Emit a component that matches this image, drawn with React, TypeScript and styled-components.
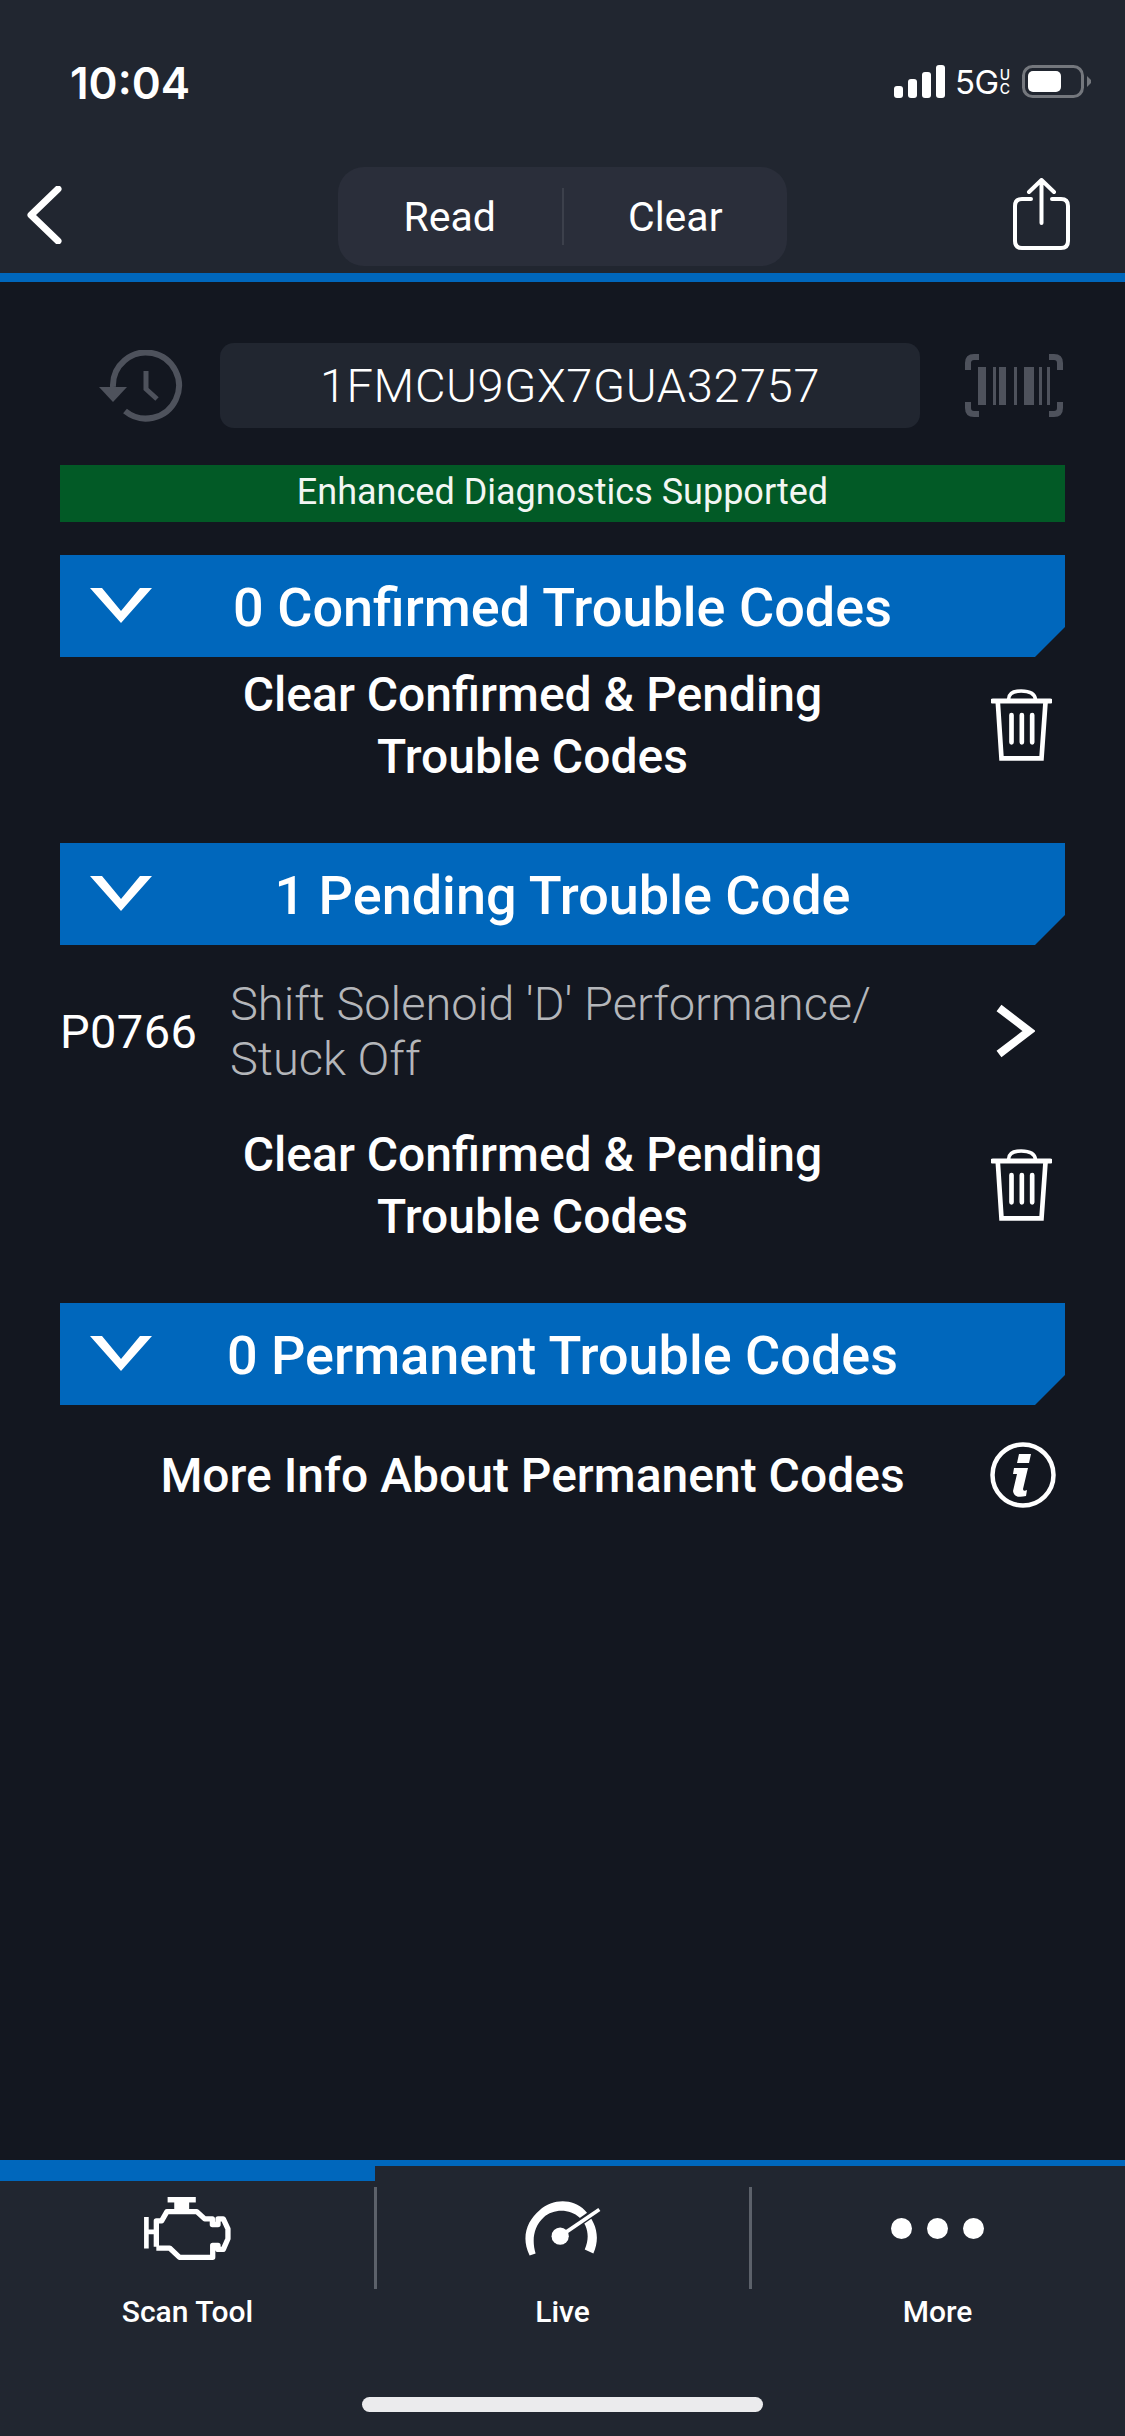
import React from "react";
import styled, { createGlobalStyle } from "styled-components";

const Global = createGlobalStyle`
  html, body { margin: 0; padding: 0; background: #131720; }
  * { box-sizing: border-box; }
`;

const Screen = styled.div`
  width: 1125px;
  height: 2436px;
  display: flex;
  flex-direction: column;
  background: #131720;
  color: #fff;
  font-family: Roboto, "Liberation Sans", sans-serif;
  overflow: hidden;
`;

const TopArea = styled.header`
  background: #212630;
  border-bottom: 9px solid #0067bc;
  height: 282px;
  display: flex;
  flex-direction: column;
`;

const StatusBar = styled.div`
  height: 160px;
  flex: none;
  display: flex;
  justify-content: space-between;
  align-items: flex-start;
  padding: 61px 34px 0 70px;
`;

const Clock = styled.span`
  font-family: Inter, Roboto, sans-serif;
  font-size: 44px;
  font-weight: 600;
  line-height: 44px;
`;

const StatusIcons = styled.div`
  display: flex;
  align-items: flex-start;
  margin-top: 4px;
`;

const NetworkLabel = styled.span`
  font-family: Inter, Roboto, sans-serif;
  font-size: 33px;
  font-weight: 400;
  line-height: 34px;
  margin-left: 10px;
  letter-spacing: -0.5px;
`;

const NetworkSub = styled.span`
  display: flex;
  flex-direction: column;
  font-family: Inter, Roboto, sans-serif;
  font-size: 14px;
  font-weight: 500;
  line-height: 14px;
  margin: 3px 12px 0 1px;
`;

const NavBar = styled.div`
  flex: none;
  height: 113px;
  padding-top: 7px;
  position: relative;
  display: flex;
  justify-content: center;
  align-items: flex-start;
`;

const BackSlot = styled.div`
  position: absolute;
  left: 26px;
  top: 26px;
  display: flex;
`;

const ShareSlot = styled.div`
  position: absolute;
  right: 55px;
  top: 18px;
  display: flex;
`;

const Segmented = styled.div`
  width: 449px;
  height: 99px;
  border-radius: 26px;
  background: #2a2e3a;
  display: flex;
  align-items: center;
`;

const Segment = styled.div<{ $divided?: boolean }>`
  flex: 1;
  height: 57px;
  padding-top: 1px;
  display: flex;
  align-items: center;
  justify-content: center;
  font-size: 41px;
  border-right: ${(p) => (p.$divided ? "2px solid #3c404b" : "none")};
`;

const Content = styled.main`
  flex: 1;
  padding: 61px 60px 0;
  display: flex;
  flex-direction: column;
`;

const VinRow = styled.div`
  height: 85px;
  display: flex;
  align-items: center;
`;

const VinIconLeft = styled.div`
  width: 160px;
  padding-left: 39px;
  display: flex;
  align-items: center;
`;

const VinField = styled.div`
  width: 700px;
  height: 85px;
  background: #212630;
  border-radius: 14px;
  display: flex;
  align-items: center;
  justify-content: center;
  font-size: 47px;
  font-weight: 300;
  letter-spacing: 0.6px;
`;

const VinIconRight = styled.div`
  flex: 1;
  display: flex;
  justify-content: flex-end;
`;

const GreenBanner = styled.div`
  margin-top: 37px;
  height: 57px;
  padding-bottom: 3px;
  background: #025a26;
  display: flex;
  align-items: center;
  justify-content: center;
  font-size: 36px;
  color: #f2f6f3;
`;

const Section = styled.section<{ $top: number }>`
  margin-top: ${(p) => p.$top}px;
  display: flex;
  flex-direction: column;
`;

const SectionHeader = styled.div`
  position: relative;
  height: 102px;
  padding-top: 2px;
  background: #0067bc;
  clip-path: polygon(0 0, 100% 0, 100% 72px, calc(100% - 30px) 100%, 0 100%);
  display: flex;
  align-items: center;
  justify-content: center;
  font-size: 54px;
  font-weight: 500;
`;

const ChevronSlot = styled.div`
  position: absolute;
  left: 30px;
  top: 33px;
  display: flex;
`;

const ActionRow = styled.div<{ $top: number }>`
  margin-top: ${(p) => p.$top}px;
  display: grid;
  grid-template-columns: 1fr 74px;
  align-items: center;
`;

const ActionText = styled.div`
  padding-left: 14px;
  text-align: center;
  font-size: 48px;
  font-weight: 500;
  line-height: 62px;
`;

const ActionIcon = styled.div`
  display: flex;
  justify-content: flex-end;
  padding-right: 13px;
  height: 72px;
  margin-top: -2px;
  align-items: center;
`;

const InfoGlyph = styled.svg`
  flex: none;
  margin-right: -4px;
`;

const CodeRow = styled.div`
  margin-top: 31px;
  display: flex;
  align-items: center;
  padding-right: 30px;
`;

const CodeId = styled.div`
  width: 170px;
  flex: none;
  font-size: 47px;
  letter-spacing: 0.4px;
`;

const CodeDesc = styled.div`
  flex: 1;
  font-size: 47px;
  font-weight: 300;
  line-height: 55px;
  color: #b4b6ba;
`;

const TabBar = styled.nav`
  flex: none;
  height: 276px;
  background: #212630;
  border-top: 6px solid #0067bc;
  display: flex;
  flex-direction: column;
`;

const Tabs = styled.div`
  display: flex;
`;

const Tab = styled.div`
  width: 375px;
  display: flex;
  flex-direction: column;
`;

const TabIndicator = styled.div<{ $active?: boolean }>`
  height: 15px;
  background: ${(p) => (p.$active ? "#0067bc" : "transparent")};
`;

const TabIcon = styled.div<{ $divided?: boolean }>`
  margin-top: 6px;
  height: 102px;
  margin-right: -2px;
  border-right: ${(p) => (p.$divided ? "3px solid #5c616a" : "3px solid transparent")};
  display: flex;
  justify-content: center;
  align-items: flex-start;
`;

const TabIconInner = styled.div<{ $top: number }>`
  margin-top: ${(p) => p.$top}px;
  display: flex;
`;

const TabLabel = styled.div`
  margin-top: 8px;
  text-align: center;
  font-size: 30px;
  font-weight: 500;
  line-height: 30px;
`;

const Dots = styled.div`
  display: flex;
  gap: 15px;
`;

const Dot = styled.span`
  width: 21px;
  height: 21px;
  border-radius: 50%;
  background: #fff;
`;

const HomeIndicator = styled.div`
  width: 401px;
  height: 15px;
  border-radius: 8px;
  background: #ebebed;
  margin: 70px auto 0;
`;

const Trash = () => (
  <svg width="61" height="72" viewBox="93 260 182 216">
    <path d="M145 292 C145 272 160 266 183 266 C207 266 224 272 226 292" fill="none" stroke="#fff" strokeWidth="11" />
    <path d="M98 296 H270" stroke="#fff" strokeWidth="15" strokeLinecap="round" />
    <path d="M113 300 L124 468 H244 L256 300" fill="none" stroke="#fff" strokeWidth="14" />
    <path d="M154 338 V420 M185 338 V420 M216 338 V420" stroke="#fff" strokeWidth="14" strokeLinecap="round" />
  </svg>
);

const Chevron = () => (
  <svg width="62" height="35" viewBox="0 0 62 35">
    <path d="M0 0 H12 L31 23 L50 0 H62 L31 35 Z" fill="#fff" />
  </svg>
);

const App = () => (
  <Screen>
    <Global />
    <TopArea>
      <StatusBar>
        <Clock>10:04</Clock>
        <StatusIcons>
          <svg width="51" height="33" viewBox="0 0 51 33">
            <rect x="0" y="21" width="9" height="12" rx="3" fill="#fff" />
            <rect x="14" y="14" width="9" height="19" rx="3" fill="#fff" />
            <rect x="28" y="7" width="9" height="26" rx="3" fill="#fff" />
            <rect x="42" y="0" width="9" height="33" rx="3" fill="#fff" />
          </svg>
          <NetworkLabel>5G</NetworkLabel>
          <NetworkSub>
            <span>U</span>
            <span>C</span>
          </NetworkSub>
          <svg width="69" height="33" viewBox="0 0 69 33">
            <rect x="1.5" y="1.5" width="59" height="30" rx="9" fill="none" stroke="#74777d" strokeWidth="3" />
            <rect x="6" y="6" width="33" height="21" rx="5" fill="#fff" />
            <path d="M65 11 L69 15 V18 L65 22 Z" fill="#74777d" />
          </svg>
        </StatusIcons>
      </StatusBar>
      <NavBar>
        <BackSlot>
          <svg width="36" height="58" viewBox="0 0 36 58">
            <path d="M32 3 L5 29 L32 55" fill="none" stroke="#fff" strokeWidth="7" strokeLinecap="round" strokeLinejoin="round" />
          </svg>
        </BackSlot>
        <Segmented>
          <Segment $divided>Read</Segment>
          <Segment>Clear</Segment>
        </Segmented>
        <ShareSlot>
          <svg width="57" height="72" viewBox="0 0 57 72">
            <path d="M18 21 H9 Q2 21 2 28 V63 Q2 70 9 70 H48 Q55 70 55 63 V28 Q55 21 48 21 H39" fill="none" stroke="#fff" strokeWidth="4" strokeLinecap="round" />
            <path d="M28.5 45 V2 M16 14 L28.5 2 L41 14" fill="none" stroke="#fff" strokeWidth="4" strokeLinecap="round" strokeLinejoin="round" />
          </svg>
        </ShareSlot>
      </NavBar>
    </TopArea>

    <Content>
      <VinRow>
        <VinIconLeft>
          <svg width="84" height="72" viewBox="99 351 84 72">
            <path d="M113 388 A33 33 0 1 1 125 412" fill="none" stroke="#4e525c" strokeWidth="6" />
            <path d="M99 388 H127 L113 403 Z" fill="#4e525c" />
            <path d="M146 372 V390 L157 400" fill="none" stroke="#4e525c" strokeWidth="5" />
          </svg>
        </VinIconLeft>
        <VinField>1FMCU9GX7GUA32757</VinField>
        <VinIconRight>
          <svg width="102" height="66" viewBox="963 354 102 66">
            <path d="M968 371 V364 Q968 358 974 358 H979 M1049 358 H1054 Q1060 358 1060 364 V371 M968 403 V409 Q968 415 974 415 H979 M1049 415 H1054 Q1060 415 1060 409 V403" fill="none" stroke="#4e525c" strokeWidth="6" />
            <path d="M978 368 H986 V406 H978 Z M993 368 H996 V406 H993 Z M999 368 H1006 V406 H999 Z M1014 368 H1017 V406 H1014 Z M1024 368 H1034 V406 H1024 Z M1039 368 H1042 V406 H1039 Z M1047 368 H1050 V406 H1047 Z" fill="#4e525c" />
          </svg>
        </VinIconRight>
      </VinRow>

      <GreenBanner>Enhanced Diagnostics Supported</GreenBanner>

      <Section $top={33}>
        <SectionHeader>
          <ChevronSlot>
            <Chevron />
          </ChevronSlot>
          0 Confirmed Trouble Codes
        </SectionHeader>
        <ActionRow $top={7}>
          <ActionText>
            Clear Confirmed &amp; Pending
            <br />
            Trouble Codes
          </ActionText>
          <ActionIcon>
            <Trash />
          </ActionIcon>
        </ActionRow>
      </Section>

      <Section $top={55}>
        <SectionHeader>
          <ChevronSlot>
            <Chevron />
          </ChevronSlot>
          1 Pending Trouble Code
        </SectionHeader>
        <CodeRow>
          <CodeId>P0766</CodeId>
          <CodeDesc>
            Shift Solenoid 'D' Performance/
            <br />
            Stuck Off
          </CodeDesc>
          <svg width="40" height="54" viewBox="0 0 40 54">
            <path d="M4 4 L34 27 L4 50" fill="none" stroke="#fff" strokeWidth="8" />
          </svg>
        </CodeRow>
        <ActionRow $top={38}>
          <ActionText>
            Clear Confirmed &amp; Pending
            <br />
            Trouble Codes
          </ActionText>
          <ActionIcon>
            <Trash />
          </ActionIcon>
        </ActionRow>
      </Section>

      <Section $top={55}>
        <SectionHeader>
          <ChevronSlot>
            <Chevron />
          </ChevronSlot>
          0 Permanent Trouble Codes
        </SectionHeader>
        <ActionRow $top={36}>
          <ActionText>More Info About Permanent Codes</ActionText>
          <ActionIcon>
            <InfoGlyph width="66" height="66" viewBox="0 0 66 66">
              <circle cx="33" cy="33" r="30.5" fill="none" stroke="#fff" strokeWidth="4.5" />
              <path d="M29 12 H41 L39 21 H27 Z" fill="#fff" />
              <path d="M24 26 H38 L33 47 Q33 50 37 48 L36 54 Q24 57 23 49 L27 32 H23 Z" fill="#fff" />
            </InfoGlyph>
          </ActionIcon>
        </ActionRow>
      </Section>
    </Content>

    <TabBar>
      <Tabs>
        <Tab>
          <TabIndicator $active />
          <TabIcon $divided>
            <TabIconInner $top={10}>
              <svg width="87" height="63" viewBox="100 50 260 190">
                <path d="M170 58 H255" stroke="#fff" strokeWidth="17" fill="none" />
                <path d="M190 60 H235 V92 H190 Z" fill="#fff" />
                <path d="M136 200 V122 H152 L168 94 H258 L282 116 H305 V133 H322 V116 H338 L352 146 V176 L338 208 H322 V196 H306 V232 H206 L176 204 H136" fill="none" stroke="#fff" strokeWidth="16" strokeLinejoin="round" />
                <path d="M106 110 V205 M106 155 H136" fill="none" stroke="#fff" strokeWidth="14" />
              </svg>
            </TabIconInner>
          </TabIcon>
          <TabLabel>Scan Tool</TabLabel>
        </Tab>
        <Tab>
          <TabIndicator />
          <TabIcon $divided>
            <TabIconInner $top={13}>
              <svg width="78" height="57" viewBox="70 60 235 170">
                <path d="M90 226 C62 170 84 120 120 90 C160 54 220 54 256 90 C290 126 304 170 282 220 L256 208 C272 172 266 136 240 112 C212 86 162 84 132 112 C102 140 96 180 108 220 Z" fill="#fff" />
                <path d="M182 168 L290 92" stroke="#212630" strokeWidth="22" />
                <path d="M182 168 L300 88" stroke="#fff" strokeWidth="11" />
                <circle cx="182" cy="168" r="26" fill="#fff" />
              </svg>
            </TabIconInner>
          </TabIcon>
          <TabLabel>Live</TabLabel>
        </Tab>
        <Tab>
          <TabIndicator />
          <TabIcon>
            <TabIconInner $top={31}>
              <Dots>
                <Dot />
                <Dot />
                <Dot />
              </Dots>
            </TabIconInner>
          </TabIcon>
          <TabLabel>More</TabLabel>
        </Tab>
      </Tabs>
      <HomeIndicator />
    </TabBar>
  </Screen>
);

export default App;
